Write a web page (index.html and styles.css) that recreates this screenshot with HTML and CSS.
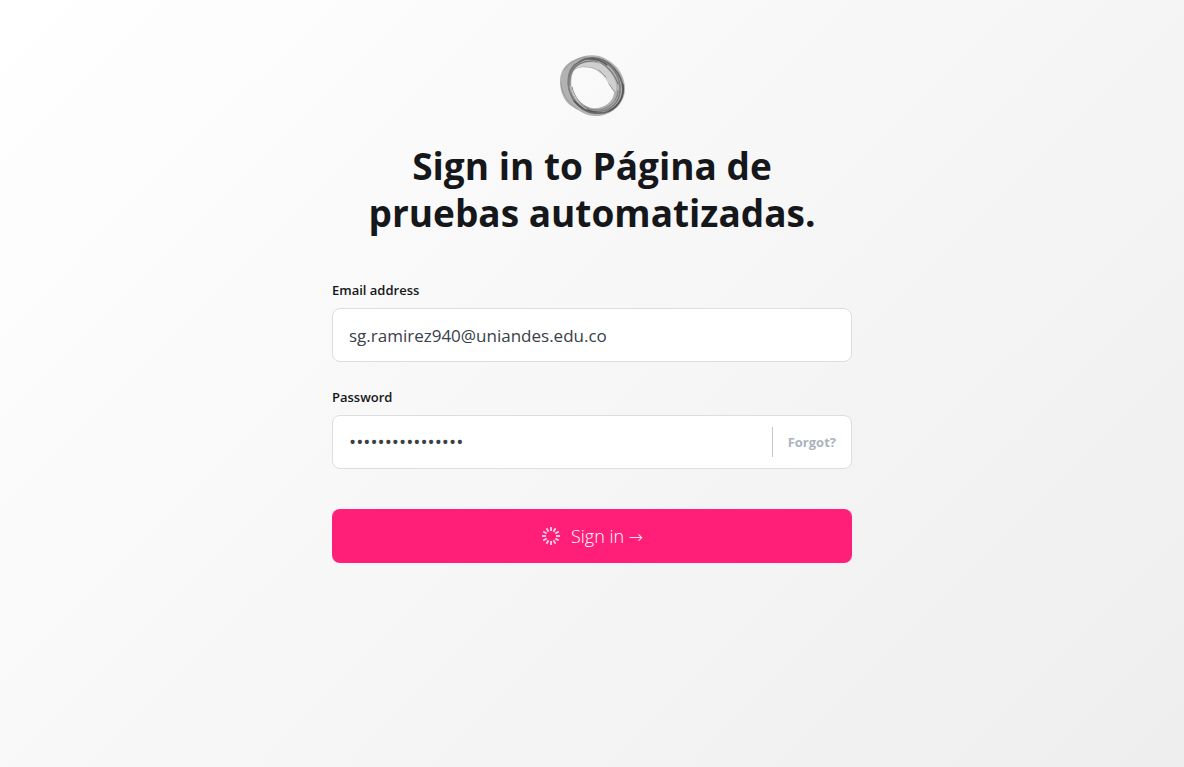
FILE: index.html
```html
<!DOCTYPE html>
<html lang="en">
<head>
<meta charset="utf-8">
<meta name="viewport" content="width=device-width, initial-scale=1">
<title>Sign in</title>
<link rel="stylesheet" href="styles.css">
</head>
<body>
<main class="signin">
  <form class="signin-form">
    <header class="signin-header">
      <svg class="site-logo" viewBox="0 0 80 74" aria-hidden="true">
        <defs><filter id="soft"><feGaussianBlur stdDeviation="0.5"/></filter></defs>
        <g filter="url(#soft)">
          <path fill="#b2b2b2" fill-rule="evenodd" d="M8 33C8 23 14 15 22 12C31 7 44 5 54 11C66 17 73 28 73 41C73 55 61 67 46 68C35 69 28 63 21 59C12 54 8 44 8 33ZM21 24C18 33 19 43 23 49C28 57 37 61 46 60C56 58 62 51 62 44C61 39 57 36 54 31C50 26 46 22 39 20C33 19 25 18 21 24Z"/>
          <path fill="#cfcfcf" d="M26 17C34 13 43 14 51 17C60 24 66 34 64 43L61 43C57 37 54 30 52 28C48 25 46 20 39 19C32 18 26 18 22 22Z"/>
          <g fill="none" stroke-linecap="round">
            <path stroke="#686868" stroke-width="1.8" d="M17 31C18 19 28 10 41 10C58 11 70 26 71 41C71 54 61 65 48 65C35 66 23 58 19 46"/>
            <path stroke="#7b7b7b" stroke-width="1.5" d="M23 16C15 23 14 38 20 49C25 59 37 65 50 63C62 61 69 51 68 39C67 27 60 16 48 12"/>
            <path stroke="#8a8a8a" stroke-width="1.5" d="M28 15C18 19 16 32 19 43C23 55 34 63 47 62C58 60 65 53 66 43"/>
            <path stroke="#777" stroke-width="1.2" d="M19 26C22 17 32 12 43 13C54 16 62 25 66 36"/>
            <path stroke="#555" stroke-width="1.2" d="M35 11C43 10 50 13 55 17M71 36C73 48 67 58 57 63M22 53C29 60 37 64 45 64"/>
            <path stroke="#858585" stroke-width="1" d="M20 39C22 49 29 57 37 60M20 22C17 30 17 37 18 42"/>
            <path stroke="#ddd" stroke-width=".7" d="M18 38C20 48 26 56 34 61M46 14L50 17"/>
            <path stroke="#9a9a9a" stroke-width="1" d="M9 35C10 46 16 55 25 61M12 22C18 14 26 10 34 9M47 22L54 29M57 36L62 43"/>
          </g>
        </g>
      </svg>
      <h1 class="signin-title">Sign in to Página de pruebas automatizadas.</h1>
    </header>
    <div class="form-group">
      <label class="form-label" for="email">Email address</label>
      <div class="field"><input class="field-input" id="email" type="email" value="sg.ramirez940@uniandes.edu.co"></div>
    </div>
    <div class="form-group">
      <label class="form-label" for="password">Password</label>
      <div class="field">
        <input class="field-input field-input-password" id="password" type="password" value="abcdefghijklmnop">
        <button class="forgot" type="button">Forgot?</button>
      </div>
    </div>
    <button class="submit" type="submit">
      <svg class="spinner" viewBox="-10 -10 20 20" aria-hidden="true">
        <g fill="none" stroke="#fff" stroke-width="1.8">
          <path opacity=".85" d="M0-5V-9M0 5V9"/>
          <path opacity=".75" d="M5 0H9M-5 0H-9"/>
          <path opacity=".8" d="M2.5-4.3L4.5-7.8M-2.5 4.3L-4.5 7.8"/>
          <path opacity=".8" d="M4.3-2.5L7.8-4.5M-4.3 2.5L-7.8 4.5"/>
          <path opacity=".75" d="M4.3 2.5L7.8 4.5M-4.3-2.5L-7.8-4.5"/>
          <path opacity=".75" d="M2.5 4.3L4.5 7.8M-2.5-4.3L-4.5-7.8"/>
        </g>
      </svg>
      <span>Sign in <span class="arrow">→</span></span>
    </button>
  </form>
</main>
</body>
</html>
```

FILE: styles.css
```css
* {
  box-sizing: border-box;
}

body {
  margin: 0;
  font-family: "Segoe UI", "Open Sans", "Noto Sans", sans-serif;
  color: #15171a;
}

button,
input {
  font: inherit;
}

.signin {
  display: flex;
  justify-content: center;
  min-height: 100vh;
  padding: 48px 24px;
  background: linear-gradient(135deg, #fff 0%, #eee 100%);
}

.signin-form {
  width: 100%;
  max-width: 520px;
}

.signin-header {
  display: flex;
  flex-direction: column;
  align-items: center;
  margin-bottom: 44px;
}

.site-logo {
  width: 80px;
  height: 74px;
  margin-bottom: 20px;
}

.signin-title {
  margin: 0;
  padding: 0 32px;
  font-size: 37px;
  font-weight: 700;
  line-height: 47px;
  text-align: center;
}

.form-group {
  margin-bottom: 25px;
}

.form-label {
  display: block;
  margin-bottom: 8px;
  font-size: 13px;
  font-weight: 600;
  line-height: 20px;
}

.field {
  display: flex;
  align-items: center;
  height: 54px;
  border: 1px solid #dddedf;
  border-radius: 8px;
  background: #fff;
}

.field:focus-within {
  border-color: #aeb7c1;
}

.field-input {
  flex: 1;
  min-width: 0;
  height: 100%;
  padding: 0 16px;
  border: 0;
  outline: 0;
  background: transparent;
  color: #394047;
  font-size: 17px;
}

.field-input-password {
  font-size: 19px;
}

.forgot {
  height: 30px;
  padding: 0 15px;
  border: 0;
  border-left: 1px solid #c5c7c9;
  background: none;
  color: #abb4be;
  font-size: 13px;
  font-weight: 700;
}

.submit {
  display: flex;
  align-items: center;
  justify-content: center;
  gap: 10px;
  width: 100%;
  height: 54px;
  margin-top: 40px;
  border: 0;
  border-radius: 8px;
  background: #ff1f78;
  color: #fff;
  font-size: 18px;
  font-weight: 300;
}

.arrow {
  font-family: "Segoe UI", "DejaVu Sans", sans-serif;
  font-size: 17px;
}

.spinner {
  width: 20px;
  height: 20px;
}
```
